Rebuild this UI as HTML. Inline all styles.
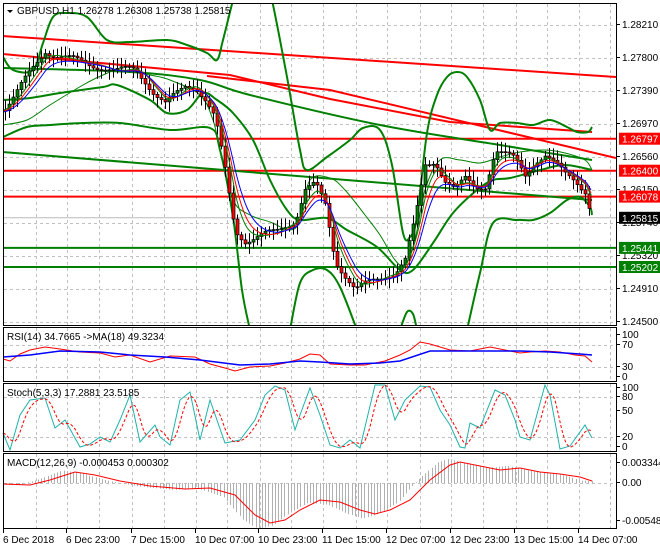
<!DOCTYPE html><html><head><meta charset="utf-8"><style>
body{margin:0;background:#fff;width:660px;height:550px;overflow:hidden;font-family:"Liberation Sans",sans-serif}
svg text{font-family:"Liberation Sans",sans-serif;font-size:10px;fill:#000}
</style></head><body>
<svg id="s" width="660" height="550" viewBox="0 0 660 550" xmlns="http://www.w3.org/2000/svg">
<rect width="660" height="550" fill="#fff"/>
<g id="grid" stroke="#c0c0c0" stroke-dasharray="3,3" stroke-width="1"></g>
<g id="plot"></g>
<g stroke="#000" stroke-width="1" fill="none">
<rect x="3.5" y="3.5" width="613" height="322"/>
<rect x="3.5" y="327.5" width="613" height="54"/>
<rect x="3.5" y="383.5" width="613" height="68"/>
<rect x="3.5" y="453.5" width="613" height="75"/>
</g>
<g id="lbl"></g>
<polygon points="7,10 13,10 10,13" fill="#000"/>
<text x="17" y="14">GBPUSD,H1  1.26278 1.26308 1.25738 1.25815</text>
<text x="7" y="340">RSI(14) 34.7665  -&gt;MA(18) 49.3234</text>
<text x="7" y="396">Stoch(5,3,3) 17.2881 23.5185</text>
<text x="7" y="466">MACD(12,26,9) -0.000453 0.000302</text>
</svg>
<script>
var P=document.getElementById('plot'),G=document.getElementById('grid'),L=document.getElementById('lbl');
function el(t,a,p){var e=document.createElementNS('http://www.w3.org/2000/svg',t);for(var k in a)e.setAttribute(k,a[k]);(p||P).appendChild(e);return e}
var vx=[36,67,99,132,164,196,227,260,291,323,356,387,420,451,483,516,547,579,610];
vx.forEach(function(x){[[4,325],[328,381],[384,451],[454,528]].forEach(function(r){el('line',{x1:x+.5,y1:r[0],x2:x+.5,y2:r[1]},G)})});
[25,58,91,124,157,190,223,256,289,322,345,367,397,437,483].forEach(function(y){el('line',{x1:4,y1:y+.5,x2:616,y2:y+.5},G)});
function interp(pts,x){for(var i=1;i<pts.length;i++){if(x<=pts[i][0]){var a=pts[i-1],b=pts[i],t=(x-a[0])/(b[0]-a[0]||1);return a[1]+t*(b[1]-a[1])}}return pts[pts.length-1][1]}
function pl(pts,c,w,extra){var a={points:pts.map(function(p){return p.join(',')}).join(' '),fill:'none',stroke:c,'stroke-width':w};for(var k in extra)a[k]=extra[k];return el('polyline',a)}
function smooth(p){var d='M'+p[0][0]+','+p[0][1];for(var i=0;i<p.length-1;i++){var p0=p[i-1]||p[i],p1=p[i],p2=p[i+1],p3=p[i+2]||p2;
d+=' C'+(p1[0]+(p2[0]-p0[0])/6)+','+(p1[1]+(p2[1]-p0[1])/6)+' '+(p2[0]-(p3[0]-p1[0])/6)+','+(p2[1]-(p3[1]-p1[1])/6)+' '+p2[0]+','+p2[1]}return d}
var cp=el('clipPath',{id:'cm'});el('rect',{x:4,y:4,width:612,height:321},cp);
var M=el('g',{'clip-path':'url(#cm)'});
function plm(pts,c,w){var e=pl(pts,c,w);M.appendChild(e);return e}
function sm(pts,c,w){var e=el('path',{d:smooth(pts),fill:'none',stroke:c,'stroke-width':w});M.appendChild(e);return e}
var close=[[3,110],[15,95],[25,80],[35,65],[45,50],[55,55],[65,58],[80,62],[95,65],[105,68],[115,72],[125,70],[135,68],[145,80],[155,95],[165,105],[175,95],[185,85],[195,85],[205,100],[215,120],[225,170],[235,230],[245,240],[255,238],[265,235],[275,232],[285,225],[295,220],[305,190],[315,185],[325,205],[335,260],[345,275],[355,290],[365,285],[375,280],[385,275],[395,272],[405,260],[415,220],[425,165],[435,160],[445,180],[455,190],[465,180],[475,188],[485,185],[495,150],[505,155],[515,160],[525,175],[535,160],[545,155],[555,165],[565,175],[575,180],[585,190],[592,217]];
plm([[3,36],[616,77]],'#f00',2);
plm([[3,54],[230,75],[330,99],[450,122],[592,132]],'#f00',2);
plm([[207,76],[330,90],[616,158]],'#f00',2);
[[138.7,'#f00'],[170.7,'#f00'],[196.6,'#f00'],[247.9,'#008000'],[267,'#008000']].forEach(function(h){plm([[4,h[0]],[616,h[0]]],h[1],2)});
plm([[4,217.8],[616,217.8]],'#bbb',1);
sm([[3,68],[130,72],[200,80],[250,95],[380,125],[500,145],[592,160]],'#008000',2);
plm([[3,152],[592,200]],'#008000',2);
// wide upper
sm([[3,57],[13,70],[33,70],[43,43],[53,17],[67,13],[87,17],[107,40],[130,42],[167,40],[187,45],[207,53],[217,60],[223,40],[233,0],[236,-10]],'#008000',2);
sm([[268,-10],[272,0],[287,77],[300,150],[307,170],[327,157],[350,140],[363,128],[380,130],[392,165],[403,233],[410,237],[417,217],[427,133],[437,95],[447,77],[457,72],[467,77],[480,100],[490,130],[500,123],[517,123],[533,125],[550,120],[567,127],[577,132],[588,132],[592,127]],'#008000',2);
// narrow bands
sm([[3,100],[30,98],[60,93],[103,87],[117,85],[150,100],[167,113],[187,110],[203,93],[217,100],[233,113],[253,140],[270,180],[287,210],[300,220],[327,218],[347,230],[377,247],[400,270],[413,270],[433,243],[453,213],[477,190],[493,180],[510,178],[540,170],[565,165],[592,170]],'#008000',2);
sm([[3,125],[27,120],[50,105],[83,85],[103,75],[120,70],[150,75],[170,80],[200,95],[213,120],[220,150],[233,200],[250,215],[270,222],[290,230],[300,220],[310,180],[330,178],[345,190],[365,215],[380,235],[395,260],[405,265],[415,240],[425,190],[440,160],[460,160],[480,163],[500,157],[520,152],[545,150],[565,153],[585,160],[592,170]],'#008000',1);
// wide lower
sm([[3,137],[27,127],[50,125],[83,123],[120,123],[170,130],[210,128],[220,150],[233,217],[242,290],[250,330]],'#008000',2);
sm([[290,330],[300,283],[313,270],[327,270],[340,287],[357,330]],'#008000',2);
sm([[400,330],[407,312],[413,314],[417,330]],'#008000',2);
sm([[467,330],[480,273],[493,223],[517,220],[533,220],[550,213],[567,200],[580,197],[590,207],[592,215]],'#008000',2);
// candles
var prev=interp(close,3);
for(var x=5;x<=592;x+=4){var c=interp(close,x)+Math.sin(x*1.7)*4,o=prev;prev=c;var hi=Math.min(o,c)-2-Math.abs(Math.sin(x*0.9))*8,lo=Math.max(o,c)+2+Math.abs(Math.cos(x*1.3))*8;
var cx=Math.round(x)+.5;M.appendChild(el('line',{x1:cx,y1:hi,x2:cx,y2:lo,stroke:'#000'}));
var bull=c<o;M.appendChild(el('rect',{x:cx-1.5,y:Math.min(o,c),width:3,height:Math.max(1,Math.abs(o-c)),fill:bull?'#008000':'#f00',stroke:'#000','stroke-width':.7}));}
function ema(n,off){var out=[],v=interp(close,3),k=2/(n+1);for(var x=3;x<=592;x+=2){v=v+k*(interp(close,x)-v);out.push([x,v+off])}return out}
plm(ema(8,0),'#008000',1);plm(ema(11,1),'#f00',1);plm(ema(15,2),'#00f',1);
// RSI
pl([[3,359],[10,361],[20,354],[30,350],[45,347],[60,349],[80,352],[100,353],[115,357],[130,355],[150,362],[170,356],[195,357],[210,364],[225,368],[235,371],[250,367],[270,366],[285,363],[300,359],[310,354],[320,355],[330,364],[350,365],[365,365],[385,361],[400,355],[410,350],[420,342],[430,344],[440,347],[450,350],[470,351],[490,347],[505,350],[520,353],[530,352],[545,351],[560,352],[575,355],[585,356],[592,362]],'#f00',1);
pl([[3,357],[30,355],[60,351],[100,352],[130,355],[165,357],[200,360],[240,365],[270,364],[300,361],[320,362],[350,364],[380,363],[400,361],[430,351],[460,351],[490,351],[520,351],[550,352],[580,354],[592,355]],'#00f',1.5);
var st=[[3,433],[10,450],[20,415],[30,400],[45,398],[55,428],[65,420],[80,447],[90,444],[100,437],[110,442],[120,420],[130,395],[140,442],[155,425],[160,437],[170,445],[180,400],[190,392],[200,440],[210,400],[225,443],[240,440],[255,420],[265,395],[275,386],[285,390],[295,430],[300,415],[310,388],[320,415],[330,445],[340,448],[350,440],[360,448],[375,385],[385,385],[395,420],[405,400],[420,386],[430,387],[440,410],[450,425],[460,447],[465,448],[470,423],[480,428],[495,390],[505,395],[515,420],[520,437],[530,440],[545,385],[550,395],[560,449],[570,446],[585,425],[592,438]];
pl(st,'#20b2aa',1);
var sd=[];for(var x=3;x<=592;x+=2){var s=0;for(var j=0;j<5;j++)s+=interp(st,Math.max(3,x-j*2.5));sd.push([x,s/5])}
pl(sd,'#f00',1,{'stroke-dasharray':'3,2'});
var sg=[[3,484],[30,485],[50,480],[75,472],[95,475],[120,481],[150,486],[185,489],[210,488],[235,495],[255,515],[270,523],[285,520],[300,510],[320,500],[340,502],[360,510],[375,514],[390,510],[410,500],[430,480],[450,465],[460,462],[480,466],[500,470],[520,468],[540,472],[560,474],[580,477],[592,481]];
for(var x=6;x<=592;x+=3.2){var v=483+(interp(sg,Math.min(592,x+12))-483)*1.15;el('line',{x1:Math.round(x)+.5,y1:483,x2:Math.round(x)+.5,y2:v,stroke:'#b0b0b0'})}
pl(sg,'#f00',1);
[[28,'1.28210'],[61,'1.27800'],[94,'1.27390'],[127,'1.26970'],[160,'1.26560'],[193,'1.26150'],[226,'1.25740'],[259,'1.25320'],[292,'1.24910'],[325,'1.24500'],[338,'100'],[348,'70'],[370,'30'],[380,'0'],[391,'100'],[400,'80'],[414,'50'],[440,'20'],[450,'0'],[466,'0.003344'],[486,'0.00'],[524,'-0.005483']].forEach(function(a){el('line',{x1:617,y1:a[0]-3.5,x2:620,y2:a[0]-3.5,stroke:'#000'},L);var t=el('text',{x:622,y:a[0]},L);t.textContent=a[1]});
[[138.7,'1.26797','#f00'],[170.7,'1.26400','#f00'],[196.6,'1.26078','#f00'],[217.8,'1.25815','#000'],[247.9,'1.25441','#008000'],[267,'1.25202','#008000']].forEach(function(a){el('rect',{x:619,y:a[0]-6,width:41,height:12,fill:a[2]},L);var t=el('text',{x:622,y:a[0]+4,style:'fill:#fff'},L);t.textContent=a[1]});
[[3,'6 Dec 2018'],[66,'6 Dec 23:00'],[131,'7 Dec 15:00'],[195,'10 Dec 07:00'],[258,'10 Dec 23:00'],[322,'11 Dec 15:00'],[386,'12 Dec 07:00'],[450,'12 Dec 23:00'],[514,'13 Dec 15:00'],[578,'14 Dec 07:00']].forEach(function(a){el('line',{x1:a[0]+.5,y1:529,x2:a[0]+.5,y2:533,stroke:'#000'},L);var t=el('text',{x:a[0],y:543},L);t.textContent=a[1]});
</script>
</body></html>
